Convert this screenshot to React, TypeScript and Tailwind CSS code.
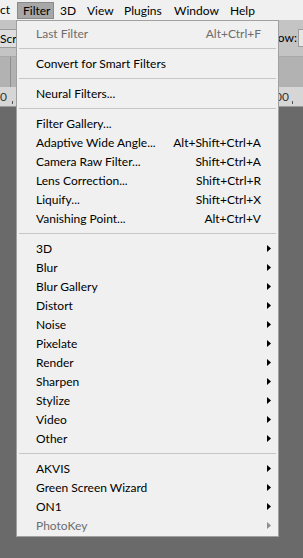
import React from 'react';

type Item = { label: string; shortcut?: string; sub?: boolean; disabled?: boolean };

const sections: Item[][] = [
  [{ label: 'Last Filter', shortcut: 'Alt+Ctrl+F', disabled: true }],
  [{ label: 'Convert for Smart Filters' }],
  [{ label: 'Neural Filters...' }],
  [
    { label: 'Filter Gallery...' },
    { label: 'Adaptive Wide Angle...', shortcut: 'Alt+Shift+Ctrl+A' },
    { label: 'Camera Raw Filter...', shortcut: 'Shift+Ctrl+A' },
    { label: 'Lens Correction...', shortcut: 'Shift+Ctrl+R' },
    { label: 'Liquify...', shortcut: 'Shift+Ctrl+X' },
    { label: 'Vanishing Point...', shortcut: 'Alt+Ctrl+V' },
  ],
  ['3D', 'Blur', 'Blur Gallery', 'Distort', 'Noise', 'Pixelate', 'Render', 'Sharpen', 'Stylize', 'Video', 'Other'].map(
    (label) => ({ label, sub: true })
  ),
  [
    { label: 'AKVIS', sub: true },
    { label: 'Green Screen Wizard', sub: true },
    { label: 'ON1', sub: true },
    { label: 'PhotoKey', sub: true, disabled: true },
  ],
];

const menuBar = [
  { label: 'Filter', w: 'w-[37px]', active: true },
  { label: '3D', w: 'w-[27px]' },
  { label: 'View', w: 'w-[37px]' },
  { label: 'Plugins', w: 'w-[50px]' },
  { label: 'Window', w: 'w-[56px]' },
  { label: 'Help', w: 'w-[40px]' },
];

const Arrow: React.FC<{ disabled?: boolean }> = ({ disabled }) => (
  <svg width="4" height="7" viewBox="0 0 4 7" className="block">
    <path d="M0 0 L4 3.5 L0 7 Z" fill={disabled ? '#8f8f8f' : '#000000'} />
  </svg>
);

const Row: React.FC<{ item: Item }> = ({ item }) => (
  <div
    className={`flex items-center h-[19px] pl-[19px] leading-[19px] ${
      item.disabled ? 'text-[#6d6d6d]' : 'text-[#000000]'
    }`}
  >
    <span className="flex-1 whitespace-nowrap">{item.label}</span>
    {item.shortcut && <span className="whitespace-nowrap">{item.shortcut}</span>}
    <span className="w-[17px] flex items-center pl-[6px]">{item.sub && <Arrow disabled={item.disabled} />}</span>
  </div>
);

const App: React.FC = () => {
  return (
    <div
      className="relative w-[303px] h-[558px] overflow-hidden bg-[#6a6a6a] text-[12px]"
      style={{ fontFamily: 'Lato, "Liberation Sans", sans-serif' }}
    >
      {/* Menu bar */}
      <div className="flex items-center h-[20px] bg-[#f0f0f0] text-[#000000]">
        <div className="w-[17px] leading-[20px]">ct</div>
        {menuBar.map((m) => (
          <div
            key={m.label}
            className={`${m.w} h-[17px] leading-[15px] pl-[5px] border ${
              m.active ? 'bg-[#a7a7a7] border-[#8a8a8a]' : 'border-transparent'
            }`}
          >
            {m.label}
          </div>
        ))}
      </div>

      {/* Options bar */}
      <div className="flex items-center justify-between h-[37px] bg-[#c4c4c4] border-b border-[#a8a8a8]">
        <div className="h-[19px] w-[48px] bg-[#dedede] border border-[#9c9c9c] border-l-0 leading-[17px] text-[#000000] whitespace-nowrap">
          Screen
        </div>
        <div className="flex items-center gap-[1px]">
          <span className="text-[#000000]">Flow:</span>
          <div className="h-[18px] w-[5px] bg-[#e6e6e6] border border-[#9c9c9c] border-r-0" />
        </div>
      </div>

      {/* Tabs strip */}
      <div className="flex h-[30px] bg-[#b2b2b2]">
        <div className="w-[11px] border-r border-[#8e8e8e]" />
        <div className="flex-1" />
      </div>

      {/* Ruler */}
      <div className="flex items-center justify-between h-[20px] bg-[#d6d6d6] text-[#333333] border-b border-[#9a9a9a]">
        <div className="flex items-end gap-[5px]">
          <span className="leading-[14px]">0</span>
          <span className="w-px h-[3px] bg-[#555555]" />
        </div>
        <div className="flex items-end gap-[3px] pr-[10px]">
          <span className="leading-[14px]">00</span>
          <span className="w-px h-[3px] bg-[#555555]" />
        </div>
      </div>

      {/* Filter dropdown */}
      <div className="absolute left-[16px] top-[20px] w-[263px] bg-[#f0f0f0] border border-[#a0a0a0] pt-[3px] pb-px">
        {sections.map((sec, i) => (
          <React.Fragment key={i}>
            {i > 0 && (
              <div className="h-[11px] flex items-center px-[2px]">
                <div className="h-px w-full bg-[#c6c6c6]" />
              </div>
            )}
            {sec.map((item) => (
              <Row key={item.label} item={item} />
            ))}
          </React.Fragment>
        ))}
      </div>
    </div>
  );
};

export default App;
